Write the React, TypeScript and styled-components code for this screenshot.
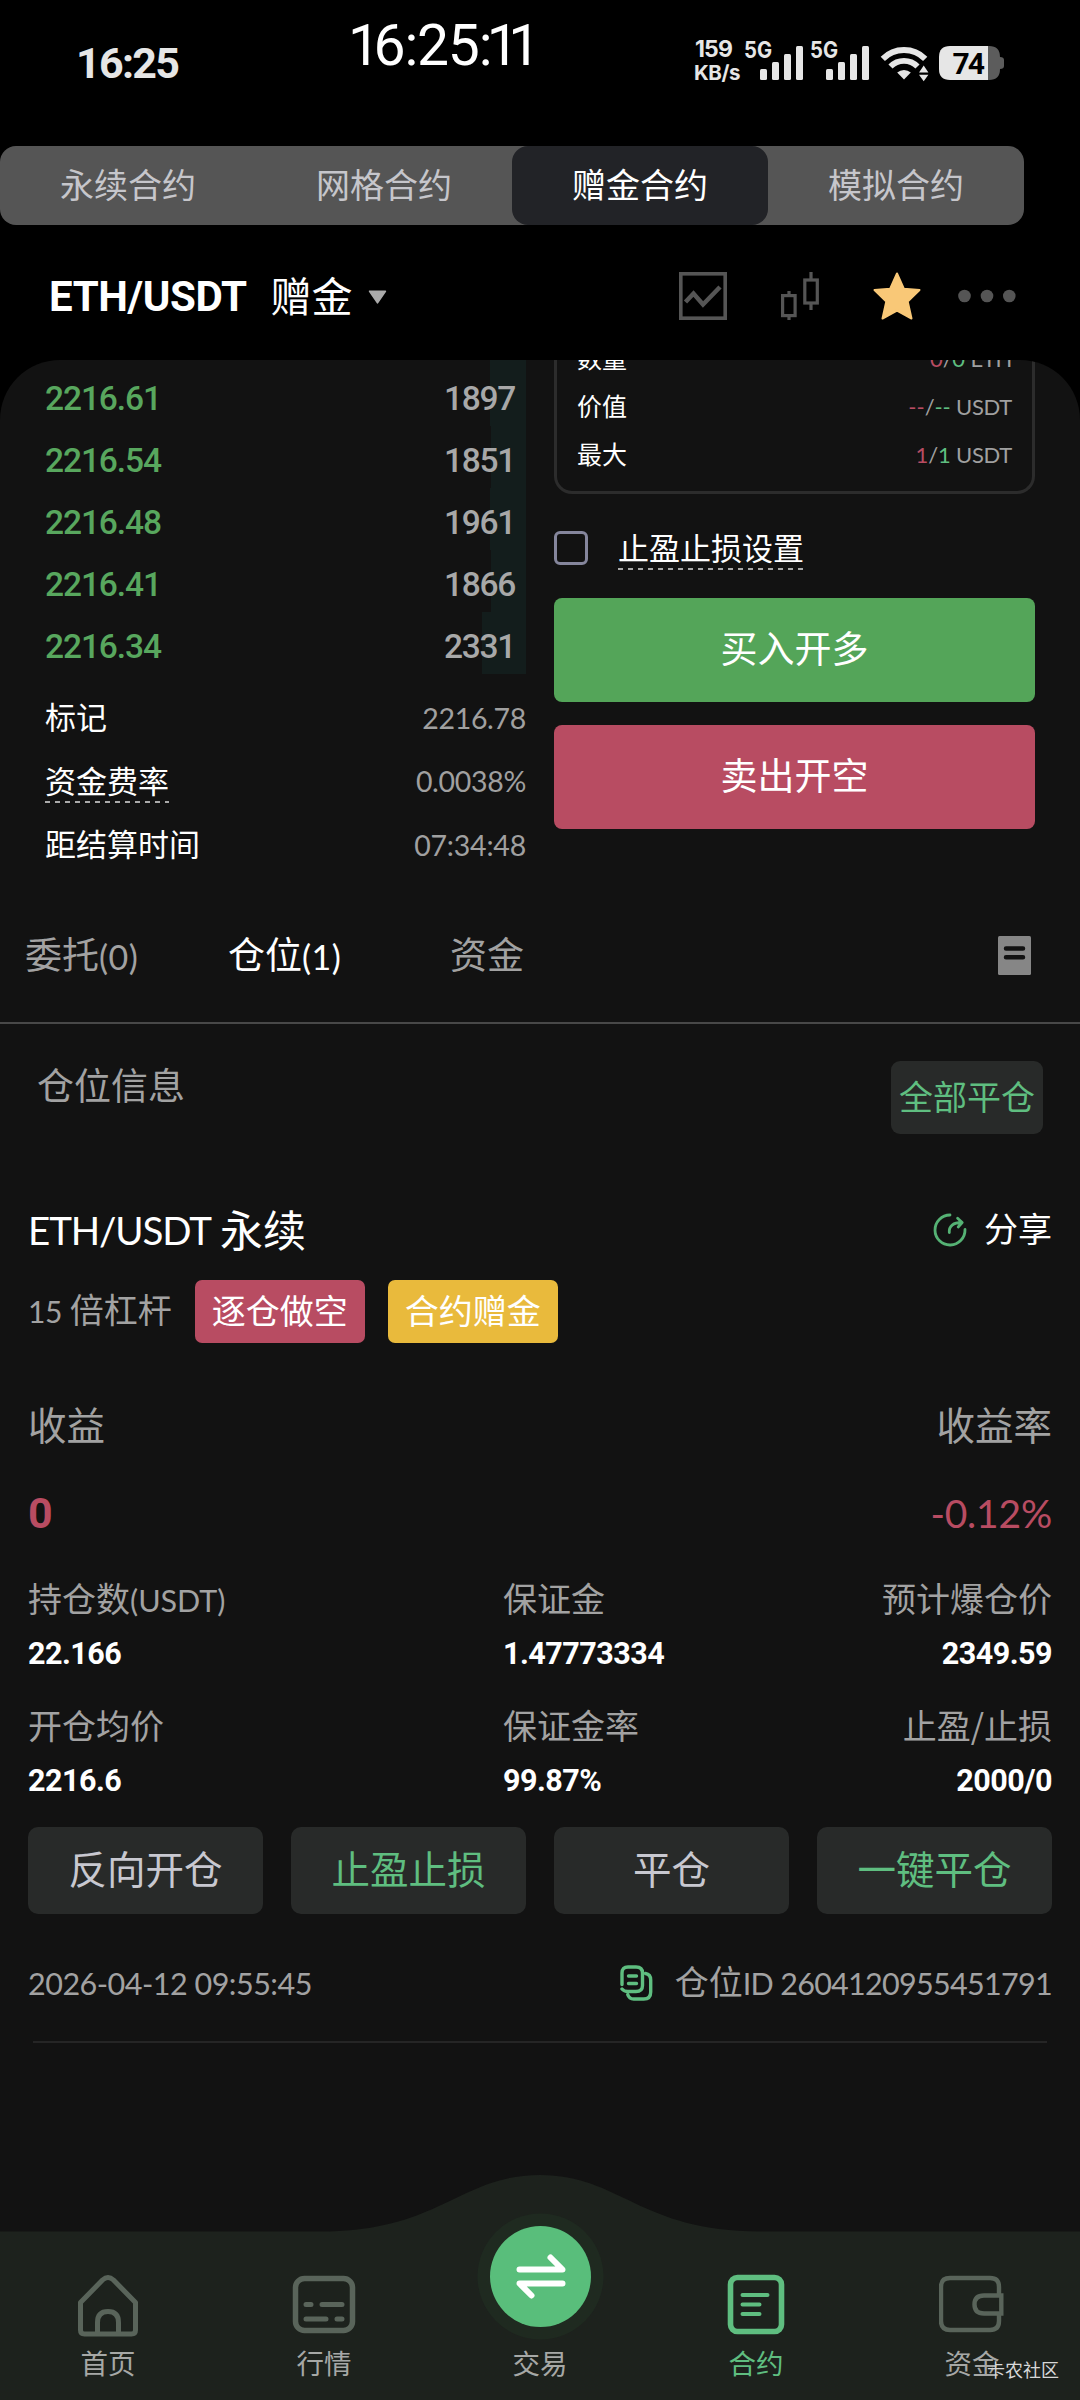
import React from "react";
import styled, { createGlobalStyle } from "styled-components";

const cjk = '"Noto Sans CJK SC", sans-serif';

const Global = createGlobalStyle`
  *, *::before, *::after { box-sizing: border-box; }
  body { margin: 0; background: #121212; }
`;

const Screen = styled.main`
  width: 1080px;
  height: 2400px;
  display: flex;
  flex-direction: column;
  overflow: hidden;
  background: #121212;
  color: #fff;
  font-family: Lato, ${cjk};
  white-space: nowrap;
`;

type TextProps = { $size: number; $color?: string; $weight?: number; $track?: number };

const Text = styled.span<TextProps>`
  font-size: ${p => p.$size}px;
  font-weight: ${p => p.$weight ?? 400};
  color: ${p => p.$color ?? "inherit"};
  letter-spacing: ${p => p.$track ?? 0}px;
  line-height: 1;
`;

const Han = styled(Text)`
  font-family: ${cjk};
  padding-bottom: 4px;
`;

const Latin = styled(Text)`
  font-family: Lato, ${cjk};
`;

const Din = styled(Text)`
  font-family: Roboto, ${cjk};
`;

/* ---------- header ---------- */

const Header = styled.header`
  height: 360px;
  flex: none;
  background: #000;
  display: flex;
  flex-direction: column;
`;

const StatusBar = styled.div`
  height: 146px;
  display: flex;
  padding-left: 76px;
  color: #e6e6e6;
`;

const Clock = styled.div`
  width: 272px;
  padding-top: 42px;
  font: 700 43px/43px Roboto, sans-serif;
  letter-spacing: -1.7px;
`;

const Timer = styled.div`
  width: 345px;
  padding-top: 17px;
  font: 400 57px/57px Roboto, sans-serif;
  letter-spacing: -1.2px;
  color: #fff;
`;

const NarrowOne = styled.span<{ $lead?: number; $track: number }>`
  margin-left: ${p => p.$lead ?? 0}px;
  letter-spacing: ${p => p.$track}px;
`;

const Rate = styled.div`
  width: 51px;
  padding-top: 37px;
  display: flex;
  flex-direction: column;
  align-items: flex-start;
  font: 700 23px/24px Inter, sans-serif;
  letter-spacing: -0.8px;
  padding-left: 2px;
  span + span { font-size: 20.5px; letter-spacing: -0.4px; margin-left: -1px; }
`;

const StatusIcons = styled.svg`
  margin-top: 30px;
  font: 700 23px Inter, sans-serif;
`;

const Segments = styled.nav`
  width: 1024px;
  height: 79px;
  display: grid;
  grid-template-columns: repeat(4, 1fr);
  background: #555;
  border-radius: 16px;
`;

const Segment = styled.button<{ $active?: boolean }>`
  border: 0;
  padding: 0 0 4px;
  border-radius: 16px;
  background: ${p => (p.$active ? "#222327" : "transparent")};
  color: ${p => (p.$active ? "#fff" : "#c6c6cb")};
  font: 400 34px/1 ${cjk};
`;

const PairBar = styled.div`
  height: 135px;
  padding: 0 64px 0 49px;
  display: flex;
  align-items: center;
`;

const PairName = styled.div`
  display: flex;
  align-items: center;
  gap: 24px;
  flex: 1;
  padding-top: 8px;
`;

/* ---------- trading area ---------- */

const Trade = styled.section`
  height: 522px;
  flex: none;
  background: #000;
`;

const TradeSheet = styled.div`
  height: 522px;
  overflow: hidden;
  border-radius: 60px 60px 0 0;
  background: #121212;
  display: grid;
  grid-template-columns: 526px 481px;
  column-gap: 28px;
`;

const Book = styled.div`
  display: flex;
  flex-direction: column;
`;

const BookRow = styled.div<{ $depth: number }>`
  height: 62px;
  display: flex;
  align-items: center;
  justify-content: space-between;
  padding: 8px 11px 0 45px;
  background: linear-gradient(#131d1c, #131d1c) right / ${p => p.$depth}px 100% no-repeat;
  &:first-child { height: 66px; padding-top: 12px; }
`;

const InfoRow = styled.div`
  height: 63.5px;
  display: flex;
  align-items: center;
  justify-content: space-between;
  padding-left: 45px;
`;

const InfoList = styled.div`
  padding-top: 12px;
`;

const Dashed = styled.span<{ $gap: number }>`
  display: inline-flex;
  padding-bottom: ${p => p.$gap}px;
  margin-bottom: -${p => p.$gap}px;
  background: repeating-linear-gradient(90deg, #aaa 0 5px, transparent 5px 10px) left bottom / 100% 2px no-repeat;
`;

const Ticket = styled.div`
  display: flex;
  flex-direction: column;
`;

const Limits = styled.div`
  height: 134px;
  border: 3px solid #2c2c2c;
  border-top: 0;
  border-radius: 0 0 18px 18px;
  padding: 0 20px;
  display: flex;
  flex-direction: column;
  overflow: hidden;
`;

const LimitRow = styled.div`
  height: 48px;
  flex: none;
  display: flex;
  align-items: center;
  justify-content: space-between;
  &:first-child { margin-top: -25px; }
`;

const CheckRow = styled.label`
  height: 34px;
  margin-top: 37px;
  display: flex;
  align-items: center;
  gap: 30px;
`;

const CheckBox = styled.span`
  width: 34px;
  height: 34px;
  border: 3px solid #85869c;
  border-radius: 6px;
`;

const OrderButton = styled.button<{ $tone: string; $top: number }>`
  height: 104px;
  margin-top: ${p => p.$top}px;
  padding: 0 0 6px;
  border: 0;
  border-radius: 8px;
  background: ${p => p.$tone};
  color: #fff;
  font: 400 37px/1 ${cjk};
`;

/* ---------- positions ---------- */

const Tabs = styled.nav`
  height: 142px;
  flex: none;
  display: flex;
  align-items: center;
  padding: 7px 49px 0 25px;
  border-bottom: 2px solid #484848;
`;

const Tab = styled.div<{ $active?: boolean; $width: number }>`
  width: ${p => p.$width}px;
  display: flex;
  align-items: center;
  color: ${p => (p.$active ? "#fff" : "#a2a2a2")};
`;

const Count = styled(Latin)`
  padding-top: 3px;
`;

const TabSpacer = styled.span`
  flex: 1;
`;

const SectionHead = styled.div`
  height: 110px;
  flex: none;
  display: flex;
  align-items: flex-end;
  justify-content: space-between;
  padding: 0 37px 0 37px;
`;

const HeadTitle = styled.div`
  padding-bottom: 27px;
  display: flex;
`;

const CloseAll = styled.button`
  width: 152px;
  height: 73px;
  padding: 0 0 4px;
  border: 0;
  border-radius: 9px;
  background: #282a29;
  color: #5fbe80;
  font: 400 34px/1 ${cjk};
`;

const Position = styled.article`
  flex: none;
  padding: 61px 28px 0;
  display: flex;
  flex-direction: column;
`;

const Spread = styled.div<{ $h: number; $top?: number }>`
  height: ${p => p.$h}px;
  padding-top: ${p => p.$top ?? 0}px;
  display: flex;
  align-items: center;
  justify-content: space-between;
`;

const Inline = styled.div<{ $gap?: number }>`
  display: flex;
  align-items: center;
  gap: ${p => p.$gap ?? 0}px;
`;

const Tag = styled.span<{ $tone: string; $ml: number }>`
  width: 170px;
  height: 63px;
  margin-left: ${p => p.$ml}px;
  padding-bottom: 3px;
  border-radius: 7px;
  display: grid;
  place-items: center;
  background: ${p => p.$tone};
  font: 400 34px/1 ${cjk};
`;

const Metrics = styled.div`
  display: grid;
  grid-template-columns: 475px 1fr auto;
  row-gap: 19px;
  margin-top: 39px;
`;

const Metric = styled.div<{ $end?: boolean }>`
  height: 108px;
  display: flex;
  flex-direction: column;
  align-items: ${p => (p.$end ? "flex-end" : "flex-start")};
`;

const MetricLabel = styled.div`
  height: 56px;
  display: flex;
  align-items: center;
  color: #a2a2a2;
`;

const MetricValue = styled.div`
  height: 52px;
  display: flex;
  align-items: center;
`;

const Actions = styled.div`
  display: grid;
  grid-template-columns: repeat(4, 235px);
  justify-content: space-between;
  margin-top: 20px;
`;

const Action = styled.button<{ $green?: boolean }>`
  height: 87px;
  padding: 0 0 7px;
  border: 0;
  border-radius: 10px;
  background: #282a29;
  color: ${p => (p.$green ? "#5fbe80" : "#c8c8d0")};
  font: 400 38.5px/1 ${cjk};
`;

const Rule = styled.hr`
  width: 1014px;
  height: 2px;
  margin: 0 auto;
  border: 0;
  background: #252525;
`;

/* ---------- bottom navigation ---------- */

const BottomNav = styled.footer`
  position: relative;
  height: 225px;
  margin-top: auto;
  flex: none;
  display: grid;
  grid-template-columns: repeat(5, 1fr);
`;

const NavShape = styled.svg`
  position: absolute;
  inset: 0;
`;

const NavItem = styled.div<{ $active?: boolean }>`
  position: relative;
  display: flex;
  flex-direction: column;
  align-items: center;
  justify-content: flex-end;
  padding-bottom: 20px;
  gap: 11px;
  color: ${p => (p.$active ? "#5fbe80" : "#a6a8a6")};
`;

const Watermark = styled.span`
  position: absolute;
  right: 21px;
  bottom: 22px;
  font: 400 18px/18px ${cjk};
  color: #d8d8d8;
`;

/* ---------- icons ---------- */

const SignalBars = ({ x }: { x: number }) => (
  <g fill="#e6e6e6">
    <rect x={x} y="39" width="7" height="11" rx="1.5" />
    <rect x={x + 12} y="32" width="7" height="18" rx="1.5" />
    <rect x={x + 24} y="24" width="7" height="26" rx="1.5" />
    <rect x={x + 36} y="16" width="7" height="34" rx="1.5" />
  </g>
);

const BatteryText = styled.text`
  font: 700 30px Roboto, sans-serif;
  letter-spacing: -2px;
`;

const StatusGlyphs = () => (
  <StatusIcons width="270" height="60" viewBox="0 0 270 60" fill="#e6e6e6">
    <text x="0" y="27.500" textLength="28" lengthAdjust="spacingAndGlyphs">5G</text>
    <SignalBars x={16} />
    <text x="66" y="27.500" textLength="28" lengthAdjust="spacingAndGlyphs">5G</text>
    <SignalBars x={82} />
    <g fill="none" stroke="#e6e6e6">
      <path d="M138.800 28.800a30 30 0 0 1 42.400 0" strokeWidth="6" />
      <path d="M146.500 36.500a19 19 0 0 1 27 0" strokeWidth="5.800" />
    </g>
    <path d="M153.200 42.500a10.500 10.500 0 0 1 13.600 0L160 49.500z" />
    <path d="M173.500 42.200l6-9 6 9v4l-6 7.500-6-7.500z" fill="#000" />
    <path d="M175 42.500l4.700-7 4.700 7zM175 44.800h9.400l-4.700 6.400z" />
    <path d="M244 16h1q11 0 11 11 4 0 4 3v6q0 3-4 3 0 11-11 11h-1z" fill="#5c5c5c" />
    <path d="M206 16h38v34h-38q-11 0-11-11V27q0-11 11-11z" />
    <BatteryText x="208.500" y="43.500" fill="#000">74</BatteryText>
  </StatusIcons>
);

const ChartIcon = () => (
  <svg width="48" height="48" viewBox="0 0 48 48" fill="none" stroke="#555" strokeWidth="3.6">
    <rect x="1.800" y="1.800" width="44.400" height="44.400" />
    <path d="M6.500 30l8-8.500L24 32.500 41 15" strokeWidth="4.500" />
  </svg>
);

const CandleIcon = () => (
  <svg width="38" height="48" viewBox="0 0 38 48" fill="none" stroke="#555" strokeWidth="3.200">
    <rect x="1.600" y="23.600" width="12.500" height="20" />
    <path d="M8 19v4M8 44v4M30 0v7M30 32v6" />
    <rect x="23.800" y="8" width="12.500" height="23" />
  </svg>
);

const StarIcon = () => (
  <svg width="48" height="48" viewBox="0 0 48 48">
    <path
      d="M24 1.500l6.800 15.200L46.500 18 34.700 29.500 38.500 46.500 24 38.500 9.500 46.500 13.300 29.500 1.500 18l15.700-1.300z"
      fill="#f9c877" stroke="#f9c877" strokeWidth="2" strokeLinejoin="round"
    />
  </svg>
);

const DotsIcon = () => (
  <svg width="58" height="14" viewBox="0 0 58 14" fill="#555">
    <circle cx="6.500" cy="7" r="6.300" />
    <circle cx="29" cy="7" r="6.300" />
    <circle cx="51.300" cy="7" r="6.300" />
  </svg>
);

const HeaderTools = styled.div`
  display: flex;
  align-items: center;
  padding-top: 7px;
  gap: 54px;
  svg:last-child { margin-left: -17px; }
`;

const Caret = styled.svg`
  margin-left: -9px;
`;

const ListIcon = () => (
  <svg width="33" height="39" viewBox="0 0 33 39">
    <rect width="33" height="39" rx="1.500" fill="#868686" />
    <path d="M8 12.500h17M8 21.300h17" stroke="#121212" strokeWidth="4.500" strokeLinecap="round" />
  </svg>
);

const ShareIcon = () => (
  <svg width="34" height="34" viewBox="0 0 34 34" fill="none" stroke="#55b274" strokeWidth="2.800" strokeLinecap="round" strokeLinejoin="round">
    <path d="M17 2A15 15 0 1 0 32 16.500" />
    <path d="M16.300 19.500c-.5-6.500 4-10 12.500-10M24.600 5.300l4.600 4.200-4 4.500" />
  </svg>
);

const CopyIcon = () => (
  <svg width="34" height="36" viewBox="0 0 34 36" fill="none" stroke="#5fbe80" strokeWidth="3.400" strokeLinecap="round" strokeLinejoin="round">
    <path d="M2 19.500V8q0-6 6-6h8q6.500 0 6.500 6v12.500q0 6-6.500 6H8q-4 0-6-2.500" />
    <path d="M25.500 8.500q5.200.8 5.200 6.500v12q0 7-7 7h-10q-4.500 0-6-4.500" />
    <path d="M8.500 11h8M8.500 18.500h8" />
  </svg>
);

const HomeIcon = () => (
  <svg width="62" height="64" viewBox="0 0 62 64" fill="none" stroke="#59645a" strokeWidth="5" strokeLinejoin="round">
    <path d="M3.500 28.500L25.500 6q5.500-5 11 0l22 22.500V56q0 4-4 4h-47q-4 0-4-4z" />
    <path d="M20.500 60V48.500q0-11 10.500-11t10.500 11V60" />
  </svg>
);

const MarketIcon = () => (
  <svg width="64" height="64" viewBox="0 0 64 64" fill="none" stroke="#59645a" strokeWidth="5.500" strokeLinecap="round">
    <rect x="3.500" y="4.500" width="57" height="52" rx="9" />
    <path d="M14 30.500h5M30 30.500h20M14 45h20M45 45h5" strokeWidth="5" />
  </svg>
);

const ContractIcon = () => (
  <svg width="58" height="64" viewBox="0 0 58 64" fill="none" stroke="#5fbe80" strokeWidth="5.600" strokeLinecap="round">
    <rect x="3.500" y="3.500" width="51" height="54" rx="7" />
    <path d="M15.500 21h25M15.500 30.500h17M15.500 40h17" strokeWidth="4" />
  </svg>
);

const WalletIcon = () => (
  <svg width="66" height="64" viewBox="1.500 1 66 64" fill="none" stroke="#59645a" strokeWidth="4.400">
    <path d="M61.500 22v-8q0-9-9-9h-40q-9 0-9 9v34q0 9 9 9h40q9 0 9-9v-8" />
    <path d="M63.800 22.500H46.500q-9.500 0-9.500 9t9.500 9h17.300z" />
  </svg>
);

/* ---------- data ---------- */

const bids = [
  { price: "2216.61", size: "1897", depth: 36 },
  { price: "2216.54", size: "1851", depth: 35 },
  { price: "2216.48", size: "1961", depth: 36 },
  { price: "2216.41", size: "1866", depth: 35 },
  { price: "2216.34", size: "2331", depth: 44 },
];

const metrics = [
  { label: "持仓数", unit: "(USDT)", value: "22.166" },
  { label: "保证金", value: "1.47773334" },
  { label: "预计爆仓价", value: "2349.59", end: true },
  { label: "开仓均价", value: "2216.6" },
  { label: "保证金率", value: "99.87%" },
  { label: "止盈/止损", value: "2000/0", end: true },
];

const Limit = ({ label, a, b, unit }: { label: string; a: string; b: string; unit: string }) => (
  <LimitRow>
    <Han $size={25}>{label}</Han>
    <Latin $size={22} $color="#a0a0a0" $track={-0.3}>
      <Latin $size={22} $color="#b84c62">{a}</Latin>/<Latin $size={22} $color="#5fbe80">{b}</Latin> {unit}
    </Latin>
  </LimitRow>
);

export default function App() {
  return (
    <Screen>
      <Global />
      <Header>
        <StatusBar>
          <Clock>16:25</Clock>
          <Timer>
            <NarrowOne $track={-6.5}>1</NarrowOne>6:25:<NarrowOne $lead={-4.5} $track={-10.5}>11</NarrowOne>
          </Timer>
          <Rate><span>159</span><span>KB/s</span></Rate>
          <StatusGlyphs />
        </StatusBar>
        <Segments>
          <Segment>永续合约</Segment>
          <Segment>网格合约</Segment>
          <Segment $active>赠金合约</Segment>
          <Segment>模拟合约</Segment>
        </Segments>
        <PairBar>
          <PairName>
            <Din $size={42} $weight={700} $track={-0.4}>ETH/USDT</Din>
            <Han $size={41}>赠金</Han>
            <Caret width="19" height="14" viewBox="0 0 18 13">
              <path d="M1.500 1h15L9 12z" fill="#aaa" stroke="#aaa" strokeWidth="1.500" strokeLinejoin="round" />
            </Caret>
          </PairName>
          <HeaderTools>
            <ChartIcon />
            <CandleIcon />
            <StarIcon />
            <DotsIcon />
          </HeaderTools>
        </PairBar>
      </Header>

      <Trade>
        <TradeSheet>
          <Book>
            {bids.map(b => (
              <BookRow key={b.price} $depth={b.depth}>
                <Din $size={33.5} $weight={500} $color="#58a75e" $track={-1.1}>{b.price}</Din>
                <Din $size={33.5} $weight={500} $color="#a8a8a8" $track={-1.3}>{b.size}</Din>
              </BookRow>
            ))}
            <InfoList>
              <InfoRow>
                <Han $size={31}>标记</Han>
                <Latin $size={28.5} $color="#a0a0a0" $track={-0.3}>2216.78</Latin>
              </InfoRow>
              <InfoRow>
                <Dashed $gap={4}><Han $size={31}>资金费率</Han></Dashed>
                <Latin $size={28.5} $color="#a0a0a0" $track={-0.3}>0.0038%</Latin>
              </InfoRow>
              <InfoRow>
                <Han $size={31}>距结算时间</Han>
                <Latin $size={28.5} $color="#a0a0a0" $track={-0.2}>07:34:48</Latin>
              </InfoRow>
            </InfoList>
          </Book>
          <Ticket>
            <Limits>
              <Limit label="数量" a="0" b="0" unit="ETH" />
              <Limit label="价值" a="--" b="--" unit="USDT" />
              <Limit label="最大" a="1" b="1" unit="USDT" />
            </Limits>
            <CheckRow>
              <CheckBox />
              <Dashed $gap={4}><Han $size={31}>止盈止损设置</Han></Dashed>
            </CheckRow>
            <OrderButton $tone="#54a559" $top={33}>买入开多</OrderButton>
            <OrderButton $tone="#b84c62" $top={23}>卖出开空</OrderButton>
          </Ticket>
        </TradeSheet>
      </Trade>

      <Tabs>
        <Tab $width={203}><Han $size={37}>委托</Han><Count $size={34} $track={0.5}>(0)</Count></Tab>
        <Tab $width={222} $active><Han $size={37}>仓位</Han><Count $size={34} $track={0.5}>(1)</Count></Tab>
        <Tab $width={80}><Han $size={37}>资金</Han></Tab>
        <TabSpacer />
        <ListIcon />
      </Tabs>

      <SectionHead>
        <HeadTitle><Han $size={37} $color="#a2a2a2">仓位信息</Han></HeadTitle>
        <CloseAll>全部平仓</CloseAll>
      </SectionHead>

      <Position>
        <Spread $h={70}>
          <Inline $gap={9}>
            <Latin $size={38.5} $track={-1.1}>ETH/USDT</Latin>
            <Han $size={43}>永续</Han>
          </Inline>
          <Inline $gap={17}>
            <ShareIcon />
            <Han $size={34}>分享</Han>
          </Inline>
        </Spread>
        <Spread $h={92}>
          <Inline>
            <Inline $gap={8}>
              <Latin $size={30} $color="#a2a2a2" $track={-0.5}>15</Latin>
              <Han $size={34} $color="#a2a2a2">倍杠杆</Han>
            </Inline>
            <Tag $tone="#b84c62" $ml={23}>逐仓做空</Tag>
            <Tag $tone="#e9ba3c" $ml={23}>合约赠金</Tag>
          </Inline>
        </Spread>
        <Spread $h={136}>
          <Han $size={38.5} $color="#a2a2a2">收益</Han>
          <Han $size={38.5} $color="#a2a2a2">收益率</Han>
        </Spread>
        <Spread $h={40}>
          <Din $size={43} $weight={700} $color="#b84c62">0</Din>
          <Latin $size={39} $color="#b84c62" $track={-0.2}>-0.12%</Latin>
        </Spread>
        <Metrics>
          {metrics.map(m => (
            <Metric key={m.label} $end={m.end}>
              <MetricLabel>
                <Han $size={34}>{m.label}</Han>
                {m.unit && <Latin $size={30.5}>{m.unit}</Latin>}
              </MetricLabel>
              <MetricValue>
                <Din $size={30.5} $weight={700} $track={-0.5}>{m.value}</Din>
              </MetricValue>
            </Metric>
          ))}
        </Metrics>
        <Actions>
          <Action>反向开仓</Action>
          <Action $green>止盈止损</Action>
          <Action>平仓</Action>
          <Action $green>一键平仓</Action>
        </Actions>
        <Spread $h={127} $top={11}>
          <Latin $size={30.5} $color="#a2a2a2" $track={-0.5}>2026-04-12 09:55:45</Latin>
          <Inline $gap={21}>
            <CopyIcon />
            <Inline>
              <Han $size={34} $color="#a2a2a2">仓位</Han>
              <Latin $size={30.5} $color="#a2a2a2" $track={-0.7}>ID 2604120955451791</Latin>
            </Inline>
          </Inline>
        </Spread>
        <Rule />
      </Position>

      <BottomNav>
        <NavShape width="1080" height="225" viewBox="0 0 1080 225">
          <path d="M0 56.500H320C440 56.500 460 0 540 0S640 56.500 760 56.500H1080V225H0z" fill="#1d221d" />
          <circle cx="540.500" cy="101.500" r="63" fill="#1f2a20" />
          <circle cx="540.500" cy="101.500" r="50.500" fill="#59be7b" />
          <g fill="none" stroke="#fff" strokeWidth="6" strokeLinecap="round" strokeLinejoin="round">
            <path d="M519.500 94.500h43l-12-12" />
            <path d="M562.500 108.500h-43l12 12" />
          </g>
        </NavShape>
        <NavItem><HomeIcon /><Han $size={27.5}>首页</Han></NavItem>
        <NavItem><MarketIcon /><Han $size={27.5}>行情</Han></NavItem>
        <NavItem><Han $size={27.5}>交易</Han></NavItem>
        <NavItem $active><ContractIcon /><Han $size={27.5}>合约</Han></NavItem>
        <NavItem><WalletIcon /><Han $size={27.5}>资金</Han></NavItem>
        <Watermark>卡农社区</Watermark>
      </BottomNav>
    </Screen>
  );
}
